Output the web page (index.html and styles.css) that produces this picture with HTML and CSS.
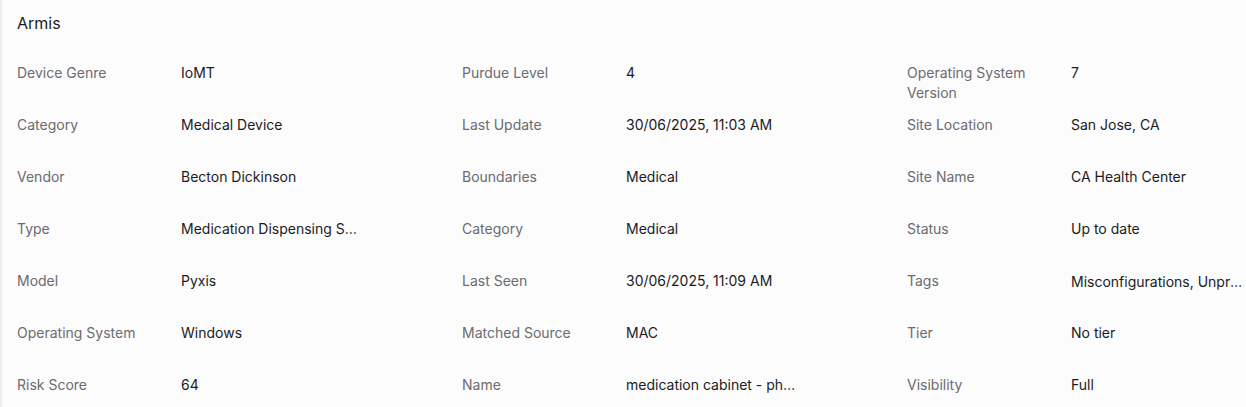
FILE: index.html
```html
<!DOCTYPE html>
<html lang="en">
<head>
<meta charset="utf-8">
<title>Armis</title>
<link rel="stylesheet" href="styles.css">
</head>
<body>
<section class="panel">
  <h2 class="title">Armis</h2>
  <div class="grid">
    <div class="col">
      <div class="row"><div class="label">Device Genre</div><div class="value">IoMT</div></div>
      <div class="row"><div class="label">Category</div><div class="value">Medical Device</div></div>
      <div class="row"><div class="label">Vendor</div><div class="value">Becton Dickinson</div></div>
      <div class="row"><div class="label">Type</div><div class="value">Medication Dispensing System</div></div>
      <div class="row"><div class="label">Model</div><div class="value">Pyxis</div></div>
      <div class="row"><div class="label">Operating System</div><div class="value">Windows</div></div>
      <div class="row"><div class="label">Risk Score</div><div class="value">64</div></div>
    </div>
    <div class="col">
      <div class="row"><div class="label">Purdue Level</div><div class="value">4</div></div>
      <div class="row"><div class="label">Last Update</div><div class="value">30/06/2025, 11:03 AM</div></div>
      <div class="row"><div class="label">Boundaries</div><div class="value">Medical</div></div>
      <div class="row"><div class="label">Category</div><div class="value">Medical</div></div>
      <div class="row"><div class="label">Last Seen</div><div class="value">30/06/2025, 11:09 AM</div></div>
      <div class="row"><div class="label">Matched Source</div><div class="value">MAC</div></div>
      <div class="row"><div class="label">Name</div><div class="value">medication cabinet - pharmacy</div></div>
    </div>
    <div class="col">
      <div class="row"><div class="label">Operating System Version</div><div class="value">7</div></div>
      <div class="row"><div class="label">Site Location</div><div class="value">San Jose, CA</div></div>
      <div class="row"><div class="label">Site Name</div><div class="value">CA Health Center</div></div>
      <div class="row"><div class="label">Status</div><div class="value">Up to date</div></div>
      <div class="row"><div class="label">Tags</div><div class="value tags">Misconfigurations, Unprotected</div></div>
      <div class="row"><div class="label">Tier</div><div class="value">No tier</div></div>
      <div class="row"><div class="label">Visibility</div><div class="value">Full</div></div>
    </div>
  </div>
</section>
</body>
</html>
```
FILE: styles.css
```css
html, body {
  margin: 0;
  padding: 0;
  background: #fcfcfc;
  overflow: hidden;
}
body {
  font-family: Inter, "Noto Sans", sans-serif;
  font-size: 14px;
  line-height: 20px;
}
.panel {
  border-left: 2px solid #ececec;
  padding: 11px 0 0 15px;
  min-height: 407px;
  box-sizing: border-box;
}
.title {
  margin: 0;
  font-size: 16px;
  line-height: 24px;
  font-weight: 400;
  color: #1d1d20;
}
.grid {
  display: grid;
  grid-template-columns: 445px 445px 1fr;
  margin-top: 28px;
}
.col {
  display: flex;
  flex-direction: column;
  min-width: 0;
}
.row {
  display: grid;
  grid-template-columns: 164px 176px;
  height: 52px;
  align-items: start;
}
.label {
  color: #6b6b70;
  padding-right: 16px;
}
.value {
  color: #1b1b1f;
  white-space: nowrap;
  overflow: hidden;
  text-overflow: ellipsis;
}
.tags {
  padding-top: 1px;
}
```
